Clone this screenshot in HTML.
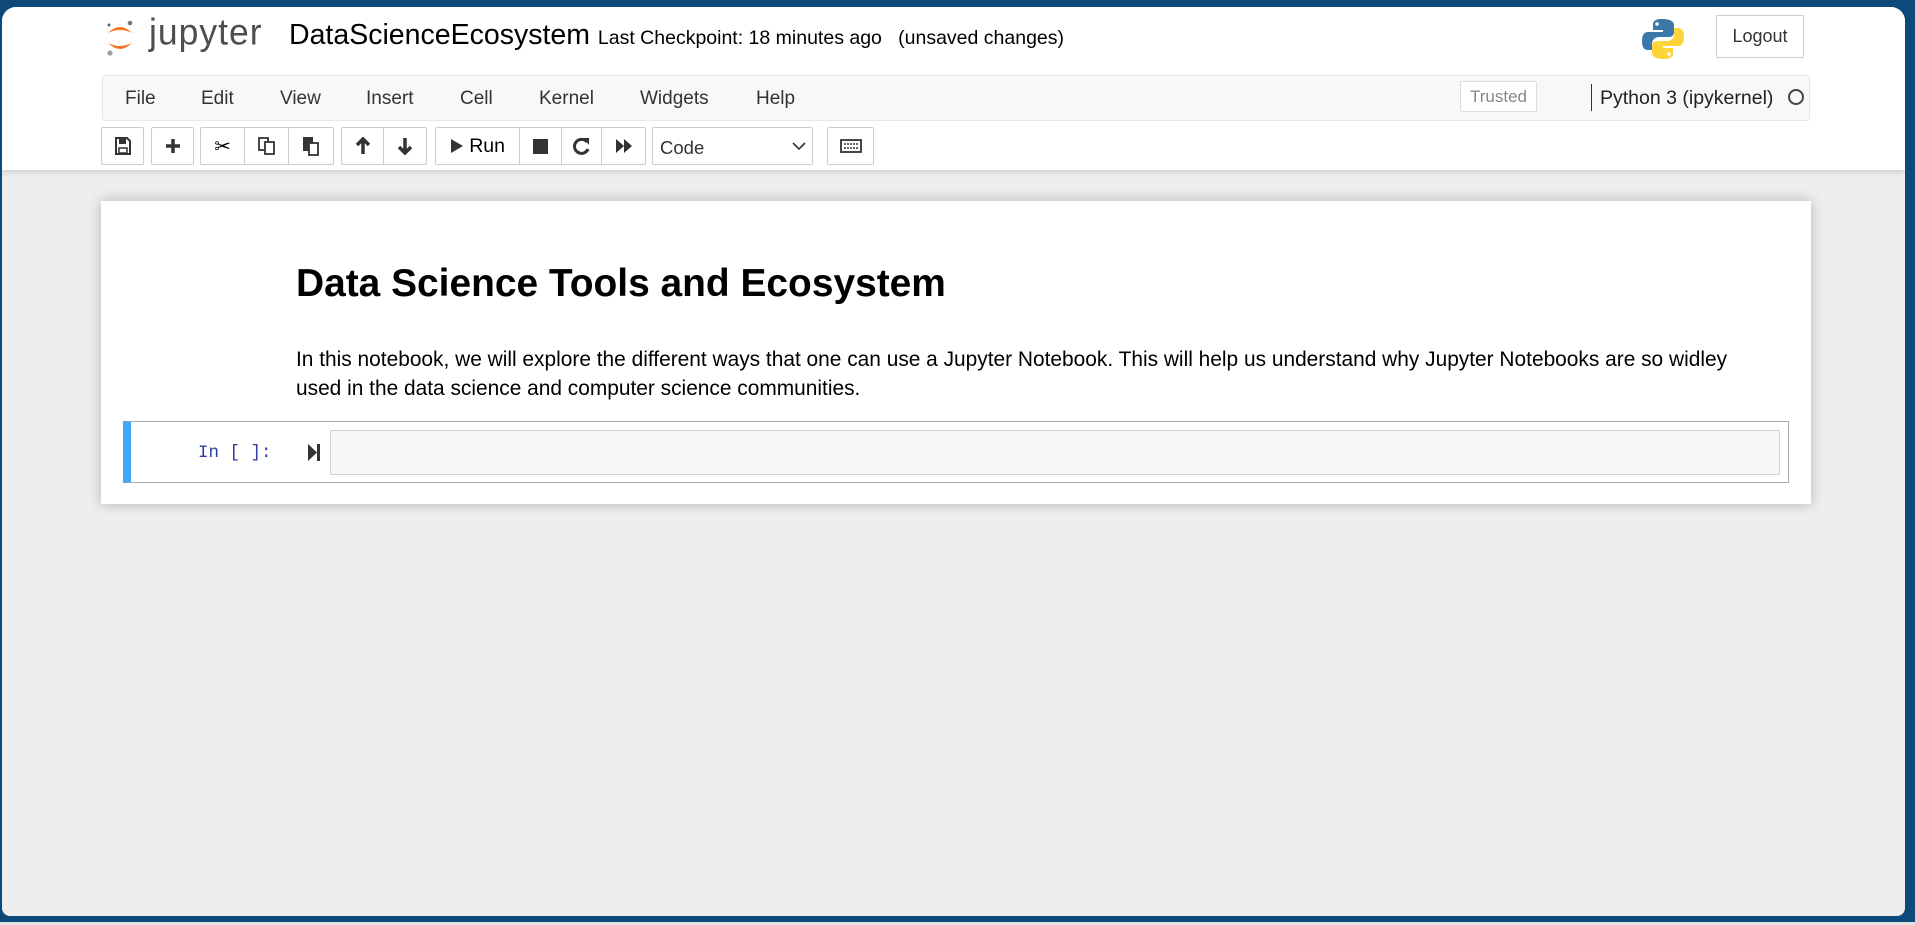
<!DOCTYPE html>
<html><head><meta charset="utf-8"><style>
*{box-sizing:border-box;margin:0;padding:0}
body{width:1915px;height:925px;overflow:hidden;background:#0d4a7a;font-family:"Liberation Sans",Arial,sans-serif;position:relative}
.a{position:absolute}
#win{left:2px;top:7px;width:1903px;height:909px;background:#eee;border-radius:14px 14px 8px 8px;overflow:hidden}
#hdr{left:0;top:0;width:1903px;height:163px;background:#fff;box-shadow:0 2px 6px rgba(0,0,0,.15)}
.btn{position:absolute;top:120px;height:38px;border:1px solid #ccc;border-radius:2px;background:#fff;display:flex;align-items:center;justify-content:center;color:#333}
.grp{position:absolute;top:120px;height:38px;border:1px solid #ccc;border-radius:2px;background:#fff;display:flex}
.grp div{border-right:1px solid #ccc;display:flex;align-items:center;justify-content:center;height:100%}
.grp div:last-child{border-right:none}
.menu{position:absolute;top:81px;font-size:19px;color:#333}
</style></head><body>
<div class="a" style="left:0;top:922px;width:1915px;height:3px;background:#e4e4e4"></div>
<div id="win" class="a">
 <div id="hdr" class="a">
  <svg class="a" style="left:103px;top:10px" width="30" height="42" viewBox="0 0 30 42">
   <path d="M3 16 Q15 4 27 16 Q15 10 3 16Z" fill="#f37726"/>
   <path d="M3 26 Q15 38 27 26 Q15 32 3 26Z" fill="#f37726"/>
   <circle cx="25" cy="6" r="2.3" fill="#767677"/><circle cx="5" cy="36" r="2.6" fill="#9e9e9e"/><circle cx="4" cy="8" r="1.5" fill="#616262"/>
  </svg>
  <div class="a" style="left:147px;top:5px;font-size:35.5px;color:#4e4e4e;letter-spacing:1px;transform:scaleY(1.05)">jupyter</div>
  <div class="a" style="left:287px;top:12px;font-size:28.5px;color:#000">DataScienceEcosystem <span style="font-size:19.5px">Last Checkpoint: 18 minutes ago&nbsp;&nbsp; (unsaved changes)</span></div>
  <svg class="a" style="left:1639px;top:10px" width="44" height="44" viewBox="0 0 44 44">
   <path d="M21 2c-9 0-9 4-9 6v5h10v2H7c-4 0-6 3-6 9s2 9 6 9h4v-6c0-4 3-7 7-7h10c3 0 5-2 5-5V8c0-3-3-6-12-6z" fill="#3b77a8"/>
   <circle cx="16" cy="7" r="1.8" fill="#fff"/>
   <path d="M23 42c9 0 9-4 9-6v-5H22v-2h15c4 0 6-3 6-9s-2-9-6-9h-4v6c0 4-3 7-7 7H16c-3 0-5 2-5 5v7c0 3 3 6 12 6z" fill="#ffd43b"/>
   <circle cx="28" cy="37" r="1.8" fill="#fff"/>
  </svg>
  <div class="a" style="left:1714px;top:8px;width:88px;height:43px;border:1px solid #ccc;border-radius:2px;font-size:18px;color:#333;display:flex;align-items:center;justify-content:center">Logout</div>
  <div class="a" style="left:100px;top:68px;width:1708px;height:46px;background:#f8f8f8;border:1px solid #e7e7e7;border-radius:3px"></div>
  <div class="menu" style="left:123px">File</div><div class="menu" style="left:199px">Edit</div><div class="menu" style="left:278px">View</div><div class="menu" style="left:364px">Insert</div><div class="menu" style="left:458px">Cell</div><div class="menu" style="left:537px">Kernel</div><div class="menu" style="left:638px">Widgets</div><div class="menu" style="left:754px">Help</div>
  <div class="a" style="left:1458px;top:74px;width:77px;height:31px;border:1px solid #ddd;border-radius:2px;color:#888;font-size:17px;display:flex;align-items:center;justify-content:center;background:#fff">Trusted</div>
  <div class="a" style="left:1589px;top:77px;width:1px;height:27px;background:#333"></div>
  <div class="a" style="left:1598px;top:80px;font-size:19.5px;color:#222">Python 3 (ipykernel)</div>
  <div class="a" style="left:1786px;top:82px;width:16px;height:16px;border:2.5px solid #444;border-radius:50%"></div>
  <div class="btn" style="left:99px;width:43px"><svg width="16" height="18" viewBox="0 0 16 18"><path d="M1 1h11l3 3v13H1z" fill="none" stroke="#333" stroke-width="2"/><rect x="4" y="2" width="7" height="5" fill="#333"/><rect x="4" y="11" width="8" height="5" fill="none" stroke="#333" stroke-width="1.5"/></svg></div>
  <div class="btn" style="left:149px;width:43px"><svg width="16" height="16"><path d="M8 1v14M1 8h14" stroke="#333" stroke-width="3.5"/></svg></div>
  <div class="grp" style="left:198px;width:134px"><div style="width:45px;font-size:20px">✂</div><div style="width:44px"><svg width="18" height="20"><rect x="1" y="2" width="9" height="12" fill="none" stroke="#333" stroke-width="1.8"/><rect x="7" y="6" width="9" height="12" fill="#fff" stroke="#333" stroke-width="1.8"/></svg></div><div style="width:45px"><svg width="18" height="20"><rect x="1" y="1" width="10" height="14" fill="#333"/><rect x="7" y="7" width="9" height="12" fill="#fff" stroke="#333" stroke-width="1.8"/></svg></div></div>
  <div class="grp" style="left:339px;width:86px"><div style="width:43px"><svg width="16" height="18"><path d="M8 2v15M2 8l6-6 6 6" fill="none" stroke="#333" stroke-width="3.5"/></svg></div><div style="width:43px"><svg width="16" height="18"><path d="M8 1v15M2 10l6 6 6-6" fill="none" stroke="#333" stroke-width="3.5"/></svg></div></div>
  <div class="grp" style="left:433px;width:211px"><div style="width:85px;font-size:19.5px;gap:6px"><svg width="13" height="16"><path d="M1 1l12 7-12 7z" fill="#333"/></svg>Run</div><div style="width:42px"><svg width="15" height="15"><rect width="15" height="15" fill="#333"/></svg></div><div style="width:41px"><svg width="18" height="18" viewBox="0 0 18 18"><path d="M14 5A7 7 0 1 0 15 12" fill="none" stroke="#333" stroke-width="3"/><path d="M10 1l6 0 0 7z" fill="#333"/></svg></div><div style="width:43px"><svg width="18" height="16"><path d="M1 1l8 7-8 7zM9 1l8 7-8 7z" fill="#333"/></svg></div></div>
  <div class="a" style="left:650px;top:120px;width:161px;height:38px;border:1px solid #ccc;border-radius:2px;background:#fff;font-size:18.5px;color:#333;padding:9px 0 0 7px">Code<svg class="a" style="right:6px;top:13px" width="14" height="10"><path d="M1 2l6 6 6-6" fill="none" stroke="#333" stroke-width="1.6"/></svg></div>
  <div class="btn" style="left:825px;width:47px"><svg width="22" height="14"><rect x="1" y="1" width="20" height="12" fill="none" stroke="#333" stroke-width="1.8"/><path d="M4 5h14M4 9h14" stroke="#333" stroke-width="1.5" stroke-dasharray="2 1"/></svg></div>
 </div>
 <div class="a" style="left:99px;top:194px;width:1710px;height:303px;background:#fff;box-shadow:0 0 12px rgba(0,0,0,.25)">
  <div class="a" style="left:195px;top:61px;font-size:38.9px;font-weight:bold;color:#000">Data Science Tools and Ecosystem</div>
  <div class="a" style="left:195px;top:144px;width:1440px;font-size:20.9px;line-height:29px;color:#000">In this notebook, we will explore the different ways that one can use a Jupyter Notebook. This will help us understand why Jupyter Notebooks are so widley used in the data science and computer science communities.</div>
  <div class="a" style="left:22px;top:220px;width:1666px;height:62px;border:1px solid #ababab;border-left:8px solid #42a5f5"></div>
  <div class="a" style="left:97px;top:242px;font-family:'Liberation Mono',monospace;font-size:17.5px;color:#303f9f">In [ ]:</div>
  <svg class="a" style="left:207px;top:243px" width="12" height="17"><path d="M0 0l9 8.5L0 17z" fill="#333"/><rect x="9" y="0" width="3" height="17" fill="#333"/></svg>
  <div class="a" style="left:229px;top:229px;width:1450px;height:45px;background:#f7f7f7;border:1px solid #cfcfcf;border-radius:2px"></div>
 </div>
</div>
</body></html>
